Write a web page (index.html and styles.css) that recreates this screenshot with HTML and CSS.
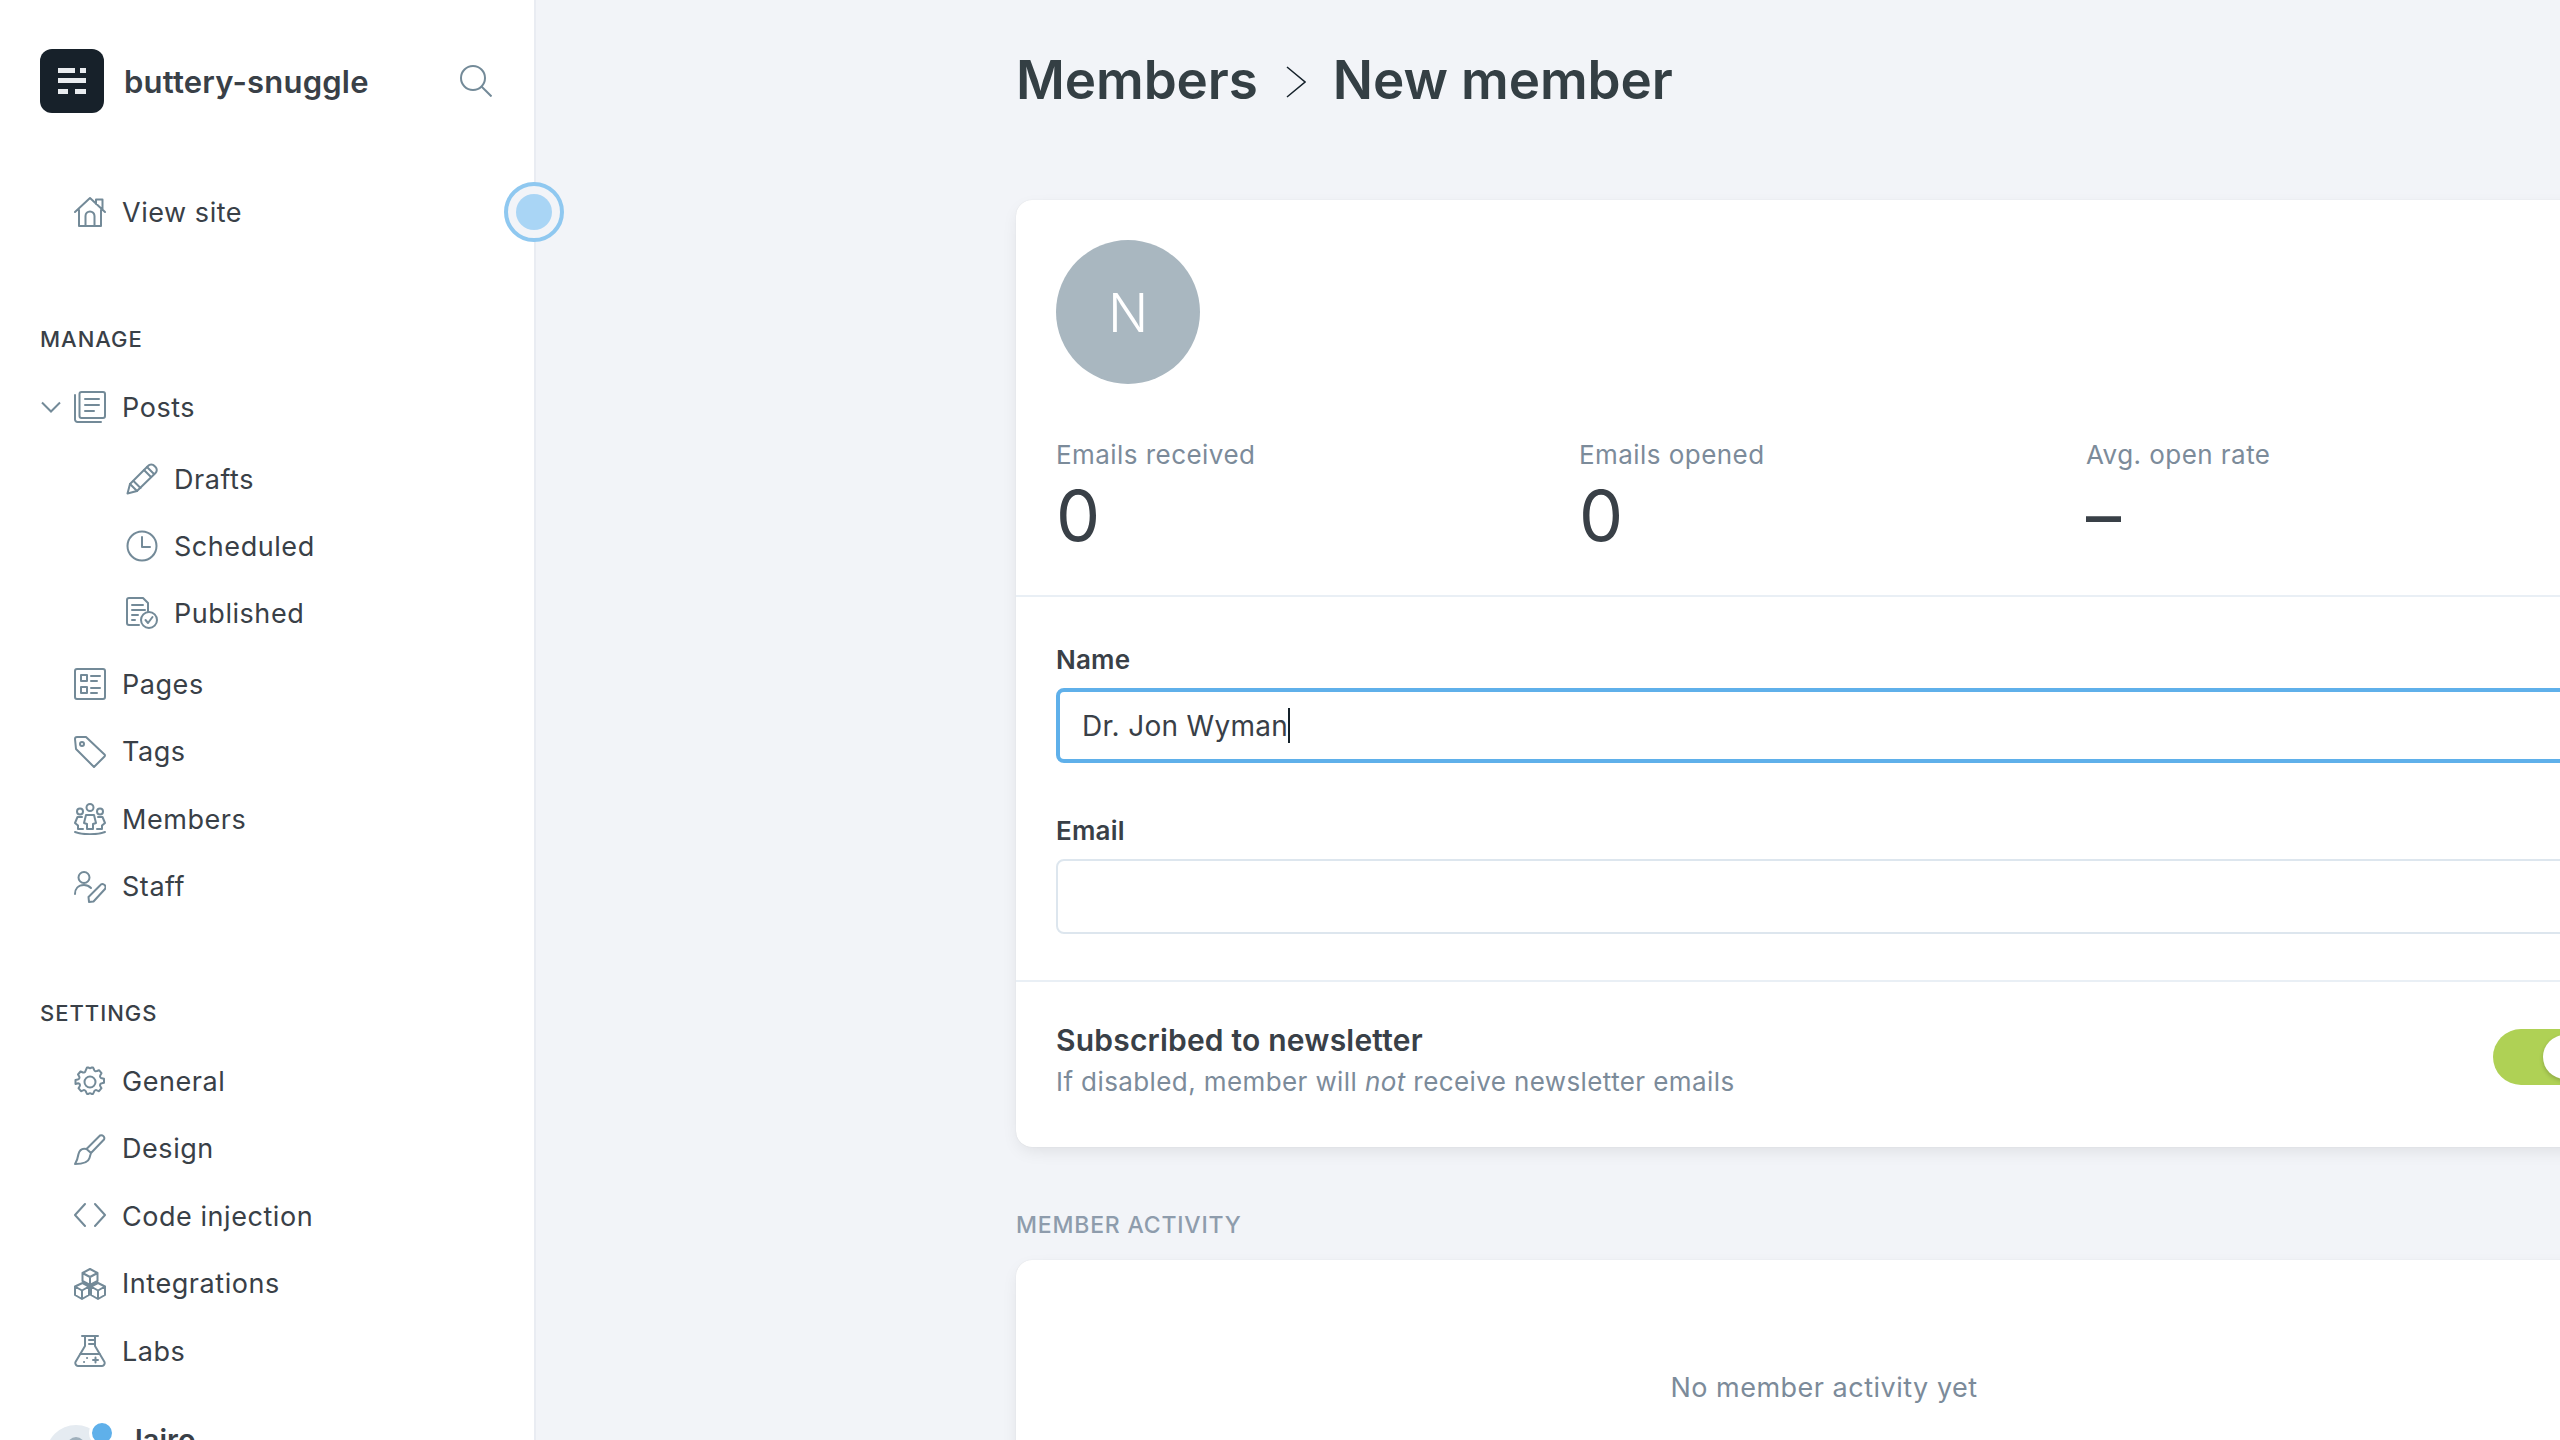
FILE: index.html
```html
<!DOCTYPE html>
<html lang="en">
<head>
  <meta charset="UTF-8">
  <title>New member</title>
  <link rel="stylesheet" href="styles.css">
</head>
<body>
  <div class="app">
    <aside class="sidebar">
      <div class="brand">
        <div class="brand-logo">
          <svg viewBox="0 0 64 64" width="64" height="64"><g fill="#e9ecef"><rect x="18" y="19" width="17" height="5"/><rect x="40" y="19" width="6" height="5"/><rect x="18" y="29" width="28" height="5"/><rect x="18" y="40" width="10" height="5"/><rect x="35" y="40" width="11" height="5"/></g></svg>
        </div>
        <span class="brand-name">buttery-snuggle</span>
        <svg class="search-icon" viewBox="0 0 32 32" width="32" height="32"><circle cx="13" cy="13" r="12"/><path d="M21.5 21.5 31.5 31.5"/></svg>
      </div>

      <nav class="nav-top">
        <a class="nav-item">
          <svg class="icon" viewBox="0 0 32 32"><path d="M1 16 16 2l15 14M22 8V3.500h6.500V13M5 14v16h22V14M11.500 30V20a4.500 4.500 0 0 1 9 0v10"/></svg>
          View site
        </a>
      </nav>

      <div class="nav-label">Manage</div>
      <nav>
        <a class="nav-item">
          <svg class="nav-caret" viewBox="0 0 20 12" width="20" height="12"><path d="M1 1.500 10 10.500 19 1.500"/></svg>
          <svg class="icon" viewBox="0 0 32 32"><path d="M1 4v24.500A2.500 2.500 0 0 0 3.500 31H27"/><rect x="5.500" y="1" width="25.500" height="26" rx="2"/><path d="M11 8h14M11 14h14M11 20h9"/></svg>
          Posts
        </a>
        <div class="nav-sub">
          <a class="nav-item">
            <svg class="icon" viewBox="0 0 32 32"><path d="M1.500 30.500 4 21 22 3a4.200 4.200 0 0 1 6.500 0l1 1a4.200 4.200 0 0 1 0 6L11 28Z"/><path d="M4 21l7 7M7.500 18l7 7M18 7l7 7M21 4l7 7"/></svg>
            Drafts
          </a>
          <a class="nav-item">
            <svg class="icon" viewBox="0 0 32 32"><circle cx="16" cy="16" r="14.500"/><path d="M16 7v10h8"/></svg>
            Scheduled
          </a>
          <a class="nav-item">
            <svg class="icon" viewBox="0 0 32 32"><path d="M13 28H3a2 2 0 0 1-2-2V3a2 2 0 0 1 2-2h14l5 5v9"/><path d="M6 8h11M6 13h13M6 18h6M6 23h3"/><circle cx="23" cy="23" r="8"/><path d="M19.500 23l2.500 3 4.500-6"/></svg>
            Published
          </a>
        </div>
        <a class="nav-item">
          <svg class="icon" viewBox="0 0 32 32"><rect x="1" y="1" width="30" height="30" rx="2"/><rect x="7" y="7" width="6" height="6"/><rect x="7" y="19" width="6" height="6"/><path d="M17 8h9M17 13h6M17 20h9M17 25h6"/></svg>
          Pages
        </a>
        <a class="nav-item">
          <svg class="icon" viewBox="0 0 32 32"><path d="M1 3a2 2 0 0 1 2-2h9l18.500 17.500a1.500 1.500 0 0 1 0 2L20 31 2 13Z"/><circle cx="8" cy="8" r="2"/></svg>
          Tags
        </a>
        <a class="nav-item">
          <svg class="icon" viewBox="0 0 32 32"><circle cx="16" cy="4.500" r="3.500"/><circle cx="6" cy="8.500" r="3"/><circle cx="26" cy="8.500" r="3"/><path d="M12 12h8l2 8-3 1v5h-6v-5l-3-1ZM8 14H3.500L1 20l3 2.500V26h5M24 14h4.500l2.500 6-3 2.500V26h-5M1 29c8 3 22 3 30 0"/></svg>
          Members
        </a>
        <a class="nav-item">
          <svg class="icon" viewBox="0 0 32 32"><circle cx="10" cy="6.500" r="5.500"/><path d="M1 23c0-5 3-9 9-9 2.500 0 5 1 7 3"/><path d="M15 31l-.500-5L26 14.500a2.800 2.800 0 0 1 5 3.500L19.500 30.500Z"/></svg>
          Staff
        </a>
      </nav>

      <div class="nav-label nav-label-settings">Settings</div>
      <nav>
        <a class="nav-item">
          <svg class="icon" viewBox="0 0 32 32"><circle cx="16" cy="16" r="5.500"/><path d="M13 1.500h1.500a2 2 0 0 0 3 0H19l1 2a2 2 0 0 0 3 1.500l2-.800 2.500 3-1.200 2a2 2 0 0 0 1.500 3l2.200.500v4l-2.200.500a2 2 0 0 0-1.500 3l1.200 2-2.500 3-2-.800a2 2 0 0 0-3 1.500l-1 2h-1.500a2 2 0 0 0-3 0H13l-1-2a2 2 0 0 0-3-1.500l-2 .800-2.500-3 1.200-2a2 2 0 0 0-1.500-3L1.500 18v-4l2.200-.500a2 2 0 0 0 1.500-3L4 8.500l2.500-3 2 .800a2 2 0 0 0 3-1.500Z"/></svg>
          General
        </a>
        <a class="nav-item">
          <svg class="icon" viewBox="0 0 32 32"><path d="M12.500 16 26 2.500a3 3 0 0 1 4 4L17 20ZM12.500 16c-4-1-7 1-8 5-.500 3-1.500 7-3.500 10 5 0 13-.500 14.500-6 .500-2 1-3.500 1.500-5"/></svg>
          Design
        </a>
        <a class="nav-item">
          <svg class="icon" viewBox="0 0 32 32"><path d="M11 4 1 15l10 11M21 4l10 11-10 11"/></svg>
          Code injection
        </a>
        <a class="nav-item">
          <svg class="icon" viewBox="0 0 32 32"><path d="M16 1l7.500 4v8L16 17l-7.500-4V5ZM8.500 5 16 9l7.500-4M16 9v8M8.500 15 15 18.500V27l-7 4-7-4v-8.500ZM1 18.500l7 4 7-4M8 22.500V31M24 15l7 3.500V27l-7 4-7-4v-8.500ZM17 18.500l7 4 7-4M24 22.500V31"/></svg>
          Integrations
        </a>
        <a class="nav-item">
          <svg class="icon" viewBox="0 0 32 32"><path d="M8 1h16M11 1v10L1.500 27a3 3 0 0 0 2.500 4h24a3 3 0 0 0 2.500-4L21 11V1M15 5h6M15 9h6M6 19h20"/><path d="M10 27h.1M13 23h.1M19 25h5M21.500 22.500v5"/></svg>
          Labs
        </a>
      </nav>

      <div class="user">
        <div class="user-avatar">
          <span class="user-head"></span>
          <span class="user-dot"></span>
        </div>
        <span class="user-name">Jairo</span>
      </div>

      <div class="pulse"><span class="pulse-dot"></span></div>
    </aside>

    <main class="main">
      <h1 class="page-title">
        <span>Members</span>
        <svg class="crumb-icon" viewBox="0 0 20 32" width="20" height="32"><path d="M1 1 19 16 1 31"/></svg>
        <span>New member</span>
      </h1>

      <section class="card">
        <div class="card-section stats-section">
          <div class="avatar">N</div>
          <div class="stats">
            <div class="stat">
              <div class="stat-label">Emails received</div>
              <div class="stat-value">0</div>
            </div>
            <div class="stat">
              <div class="stat-label">Emails opened</div>
              <div class="stat-value">0</div>
            </div>
            <div class="stat">
              <div class="stat-label">Avg. open rate</div>
              <div class="stat-value">–</div>
            </div>
          </div>
        </div>

        <div class="card-section form-section">
          <label class="field-label">Name</label>
          <div class="field field-active">Dr. Jon Wyman<span class="caret"></span></div>
          <label class="field-label field-label-next">Email</label>
          <div class="field"></div>
        </div>

        <div class="newsletter">
          <div>
            <div class="newsletter-title">Subscribed to newsletter</div>
            <div class="newsletter-text">If disabled, member will <em>not</em> receive newsletter emails</div>
          </div>
          <div class="toggle"><span class="toggle-knob"></span></div>
        </div>
      </section>

      <div class="activity-label">Member activity</div>
      <section class="card activity-card">
        <p class="activity-empty">No member activity yet</p>
      </section>
    </main>
  </div>
</body>
</html>
```

FILE: styles.css
```css
* {
  box-sizing: border-box;
}

html,
body {
  margin: 0;
  height: 100%;
  overflow: hidden;
}

body {
  font-family: Inter, "Noto Sans", sans-serif;
  color: #394047;
  background: #f2f4f8;
}

.app {
  display: flex;
  width: 2560px;
  height: 1440px;
  overflow: hidden;
}

/* sidebar */
.sidebar {
  position: relative;
  flex: 0 0 536px;
  height: 1440px;
  padding-top: 49px;
  background: #fff;
  border-right: 2px solid #e9ecf2;
}

.brand {
  display: flex;
  align-items: center;
  height: 64px;
  padding: 0 40px;
}

.brand-logo {
  width: 64px;
  height: 64px;
  border-radius: 12px;
  background: #17212a;
}

.brand-logo svg {
  display: block;
}

.brand-name {
  margin-left: 20px;
  padding-top: 1px;
  font-size: 31px;
  font-weight: 600;
  letter-spacing: 0.2px;
}

.search-icon {
  margin-left: auto;
  margin-right: 2px;
  fill: none;
  stroke: #738a98;
  stroke-width: 2;
}

.nav-top {
  margin-top: 65px;
}

.nav-item {
  display: flex;
  align-items: center;
  gap: 16px;
  height: 67.4px;
  padding-left: 74px;
  padding-top: 1px;
  font-size: 27px;
  letter-spacing: 0.55px;
  color: #394047;
}

.icon {
  flex: none;
  width: 32px;
  height: 32px;
  fill: none;
  stroke: #738a98;
  stroke-width: 2;
  stroke-linecap: round;
  stroke-linejoin: round;
}

.nav-caret {
  flex: none;
  margin-left: -33px;
  margin-right: -3px;
  fill: none;
  stroke: #738a98;
  stroke-width: 2;
}

.nav-sub {
  padding: 5px 0 4px;
}

.nav-sub .nav-item {
  height: 67px;
  padding-left: 126px;
}

.nav-label {
  height: 24px;
  margin: 82px 0 21.500px 40px;
  font-size: 22px;
  line-height: 24px;
  font-weight: 500;
  letter-spacing: 1px;
  text-transform: uppercase;
  color: #394047;
}

.nav-label-settings {
  margin-top: 81px;
  margin-bottom: 22.500px;
}

.user {
  display: flex;
  gap: 20px;
  margin: 41px 0 0 46px;
}

.user-avatar {
  position: relative;
  flex: none;
  width: 60px;
  height: 60px;
  border-radius: 50%;
  background: #e5ebf1;
}

.user-head {
  position: absolute;
  top: 12px;
  left: 21px;
  width: 18px;
  height: 18px;
  border-radius: 50%;
  background: #9fb0bc;
}

.user-dot {
  position: absolute;
  top: -5px;
  right: -9px;
  width: 20px;
  height: 20px;
  box-sizing: content-box;
  border: 3px solid #fff;
  border-radius: 50%;
  background: #5fb0ea;
}

.user-name {
  font-size: 29px;
  line-height: 30px;
  font-weight: 600;
}

.pulse {
  position: absolute;
  top: 182px;
  left: 504px;
  display: flex;
  align-items: center;
  justify-content: center;
  width: 60px;
  height: 60px;
  border: 4px solid #8fc8f0;
  border-radius: 50%;
  background: #f2f4f8;
}

.pulse-dot {
  width: 36px;
  height: 36px;
  border-radius: 50%;
  background: #a9d5f5;
}

/* main column */
.main {
  flex: none;
  width: 2024px;
  padding-left: 480px;
}

.page-title {
  display: flex;
  align-items: center;
  height: 64px;
  margin: 48px 0 88px;
  font-size: 53px;
  line-height: 64px;
  font-weight: 600;
  letter-spacing: -0.1px;
  color: #343f44;
}

.crumb-icon {
  margin: 4px 27px 0 28px;
  fill: none;
  stroke: #15212a;
  stroke-width: 1.500;
}

.card {
  width: 1616px;
  background: #fff;
  border-radius: 16px;
  box-shadow: 0 0 1px rgba(0, 0, 0, 0.12), 0 6px 18px -4px rgba(0, 0, 0, 0.1);
}

.card-section {
  padding: 40px;
  border-bottom: 2px solid #e9eff5;
}

.stats-section {
  height: 397px;
}

.avatar {
  display: flex;
  align-items: center;
  justify-content: center;
  width: 144px;
  height: 144px;
  padding-top: 2px;
  border-radius: 50%;
  background: #a9b7c0;
  color: #fff;
  font-size: 53px;
  font-weight: 300;
}

.stats {
  display: grid;
  grid-template-columns: 523px 507px 1fr;
  margin-top: 55px;
}

.stat-label {
  height: 32px;
  font-size: 26px;
  line-height: 32px;
  letter-spacing: 0.45px;
  color: #7c8b9a;
}

.stat-value {
  margin-top: 9px;
  font-size: 70px;
  line-height: 72px;
  font-weight: 400;
  color: #394047;
}

.form-section {
  height: 385px;
  padding-top: 48px;
}

.field-label {
  display: block;
  height: 30px;
  font-size: 26px;
  line-height: 30px;
  font-weight: 600;
  letter-spacing: 0.2px;
}

.field-label-next {
  margin-top: 53px;
}

.field {
  display: flex;
  align-items: center;
  height: 75px;
  margin-top: 13px;
  padding: 0 24px;
  border: 2px solid #dde6ee;
  border-radius: 8px;
  background: #fff;
  font-size: 28px;
  letter-spacing: 0.3px;
}

.field-active {
  border: 4px solid #5fb0ea;
  padding: 0 22px;
}

.caret {
  width: 2px;
  height: 35px;
  background: #15212a;
}

.newsletter {
  display: flex;
  align-items: flex-start;
  justify-content: space-between;
  height: 165px;
  padding: 40px 0 0 40px;
}

.newsletter-title {
  font-size: 30px;
  line-height: 36px;
  font-weight: 600;
  letter-spacing: 0.2px;
}

.newsletter-text {
  margin-top: 8px;
  font-size: 26px;
  line-height: 32px;
  letter-spacing: 0.4px;
  color: #7c8b9a;
}

.toggle {
  position: relative;
  width: 100px;
  height: 56px;
  margin-top: 7px;
  margin-right: 39px;
  border-radius: 28px;
  background: #afd155;
}

.toggle-knob {
  position: absolute;
  top: 6px;
  left: 50px;
  width: 44px;
  height: 44px;
  border-radius: 50%;
  background: #fff;
  box-shadow: 0 2px 4px rgba(0, 0, 0, 0.2);
}

.activity-label {
  margin-top: 65px;
  height: 26px;
  font-size: 23px;
  line-height: 26px;
  font-weight: 500;
  letter-spacing: 0.8px;
  text-transform: uppercase;
  color: #8e9cac;
}

.activity-card {
  height: 400px;
  margin-top: 22px;
  padding-top: 110px;
}

.activity-empty {
  margin: 0;
  text-align: center;
  font-size: 27px;
  line-height: 36px;
  letter-spacing: 0.5px;
  color: #7c8b9a;
}
```
